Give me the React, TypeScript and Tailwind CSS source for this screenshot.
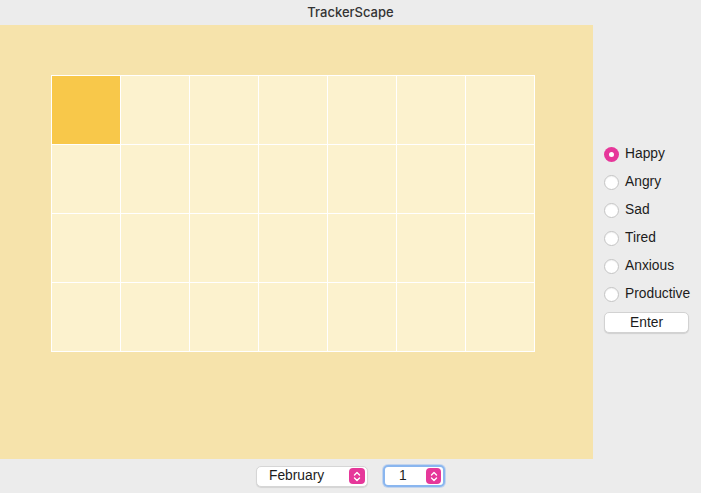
import { useState } from 'react'

const MOODS = ['Happy', 'Angry', 'Sad', 'Tired', 'Anxious', 'Productive']

function Stepper({ className }: { className: string }) {
  return (
    <div className={`flex items-center justify-center rounded-[4px] bg-[#e6379a] ${className}`}>
      <svg width="8" height="11" viewBox="0 0 8 11" fill="none" stroke="white" strokeWidth="1.4" strokeLinecap="round" strokeLinejoin="round">
        <path d="M1.5 4 L4 1.5 L6.5 4" />
        <path d="M1.5 7 L4 9.5 L6.5 7" />
      </svg>
    </div>
  )
}

export default function App() {
  const [mood, setMood] = useState('Happy')
  const cells = Array.from({ length: 28 }, (_, i) => i)

  return (
    <div className="flex h-[493px] w-[701px] flex-col overflow-hidden bg-[#ececec] text-[13.8px] text-[#1c1c1c] font-['Liberation_Sans',Arial,sans-serif]">
      {/* Title bar */}
      <div className="flex h-[25px] shrink-0 items-center justify-center font-['Inter',sans-serif] text-[13px] font-medium text-[#333]">
        TrackerScape
      </div>

      <div className="flex h-[434px] shrink-0">
        {/* Calendar panel */}
        <div className="w-[593px] shrink-0 bg-[#f6e3ab] pl-[51px] pt-[50px]">
          <div className="grid w-[484px] grid-cols-7 gap-px border border-white bg-white">
            {cells.map((i) => (
              <div key={i} className={`h-[68px] ${i === 0 ? 'bg-[#f8c84a]' : 'bg-[#fcf2ce]'}`} />
            ))}
          </div>
        </div>

        {/* Mood picker */}
        <div className="flex flex-col pl-[11px] pt-[115px]">
          {MOODS.map((m) => (
            <button
              key={m}
              type="button"
              onClick={() => setMood(m)}
              className="flex h-[28px] items-center gap-[6px] text-left"
            >
              {mood === m ? (
                <span className="flex h-[15px] w-[15px] items-center justify-center rounded-full bg-[#e6379a]">
                  <span className="h-[5px] w-[5px] rounded-full bg-white" />
                </span>
              ) : (
                <span className="h-[15px] w-[15px] rounded-full border border-[#c4c4c4] bg-white shadow-[inset_0_1px_1px_rgba(0,0,0,0.05)]" />
              )}
              <span className="text-[13.8px] text-[#1c1c1c]">{m}</span>
            </button>
          ))}
          <button
            type="button"
            className="mt-[4px] h-[21px] w-[85px] rounded-[5px] border border-[#d2d2d2] bg-white text-[13.8px] text-[#1c1c1c] shadow-[0_1px_1px_rgba(0,0,0,0.12)]"
          >
            Enter
          </button>
        </div>
      </div>

      {/* Bottom controls */}
      <div className="flex flex-1 items-center justify-center gap-[15px]">
        <div className="flex h-[21px] w-[112px] items-center justify-between rounded-[5px] border border-[#d6d6d6] bg-white pl-[12px] pr-[2px] shadow-[0_1px_1px_rgba(0,0,0,0.1)]">
          <span className="text-[13.8px] text-[#1c1c1c]">February</span>
          <Stepper className="h-[16px] w-[16px]" />
        </div>
        <div className="flex h-[22px] w-[62px] items-center justify-between rounded-[5px] border-2 border-[#8ab6ef] bg-white pl-[14px] pr-[2px] shadow-[0_0_0_1px_rgba(120,170,240,0.35)]">
          <span className="text-[13.8px] text-[#1c1c1c]">1</span>
          <Stepper className="h-[16px] w-[15px]" />
        </div>
      </div>
    </div>
  )
}
